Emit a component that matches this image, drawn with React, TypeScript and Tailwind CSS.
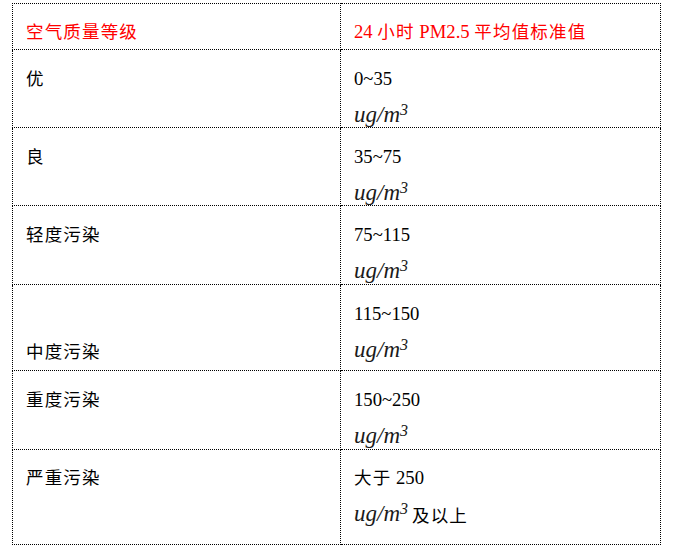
import React from "react";

type Row = {
  level: string;
  levelPad: string;
  range: string;
  suffix?: string;
  height: string;
  pad: string;
};

const rows: Row[] = [
  { level: "优", levelPad: "pt-[12px]", range: "0~35", height: "h-[77px]", pad: "pt-[12px]" },
  { level: "良", levelPad: "pt-[12px]", range: "35~75", height: "h-[77px]", pad: "pt-[12px]" },
  { level: "轻度污染", levelPad: "pt-[12px]", range: "75~115", height: "h-[78px]", pad: "pt-[12px]" },
  { level: "中度污染", levelPad: "pt-[50px]", range: "115~150", height: "h-[85px]", pad: "pt-[12px]" },
  { level: "重度污染", levelPad: "pt-[12px]", range: "150~250", height: "h-[78px]", pad: "pt-[12px]" },
  {
    level: "严重污染",
    levelPad: "pt-[11px]",
    range: "大于 250",
    suffix: "及以上",
    height: "h-[94px]",
    pad: "pt-[11px]",
  },
];

// Chinese runs: glyph a bit smaller, tracking keeps the 14pt advance
const Han = ({ children }: { children: React.ReactNode }) => (
  <span className="text-[17.5px] tracking-[1.17px]">{children}</span>
);

const Unit = ({ suffix }: { suffix?: string }) => (
  <div className="mt-[3px] leading-[33px] h-[33px] whitespace-nowrap">
    <span className="italic text-[#1a1a1a] text-[23px] font-['Liberation_Serif',serif]">
      ug/m<sup className="text-[16px] top-[-7px]">3</sup>
    </span>
    {suffix && (
      <span className="ml-[4px] relative top-[1px]">
        <Han>{suffix}</Han>
      </span>
    )}
  </div>
);

const Range = ({ text }: { text: string }) => {
  // split Chinese prefix (e.g. 大于) from digits
  const m = text.match(/^([\u4e00-\u9fff]+)(.*)$/);
  if (m) {
    return (
      <>
        <Han>{m[1]}</Han>
        {m[2]}
      </>
    );
  }
  return <>{text}</>;
};

export default function App() {
  return (
    <div className="bg-white min-h-[555px] w-[692px] pt-[3px] pl-[12px] font-['Liberation_Serif','Noto_Sans_CJK_SC',serif] text-[18.67px] text-black">
      <table className="border-collapse">
        <tbody>
          <tr>
            <td className="p-0 align-top border border-dotted border-black">
              <div className="w-[327px] h-[45px] pt-[11px] pl-[13px] leading-[33px] text-[#ff0000]">
                <Han>空气质量等级</Han>
              </div>
            </td>
            <td className="p-0 align-top border border-dotted border-black">
              <div className="w-[319px] h-[45px] pt-[11px] pl-[13px] leading-[33px] text-[#ff0000] whitespace-nowrap">
                24 <Han>小时</Han> PM2.5 <Han>平均值标准值</Han>
              </div>
            </td>
          </tr>
          {rows.map((r) => (
            <tr key={r.level}>
              <td className="p-0 align-top border border-dotted border-black">
                <div className={`w-[327px] ${r.height} ${r.levelPad} pl-[13px] leading-[33px]`}>
                  <Han>{r.level}</Han>
                </div>
              </td>
              <td className="p-0 align-top border border-dotted border-black">
                <div className={`w-[319px] ${r.height} ${r.pad} pl-[13px]`}>
                  <div className="leading-[33px] h-[33px] whitespace-nowrap">
                    <Range text={r.range} />
                  </div>
                  <Unit suffix={r.suffix} />
                </div>
              </td>
            </tr>
          ))}
        </tbody>
      </table>
    </div>
  );
}
